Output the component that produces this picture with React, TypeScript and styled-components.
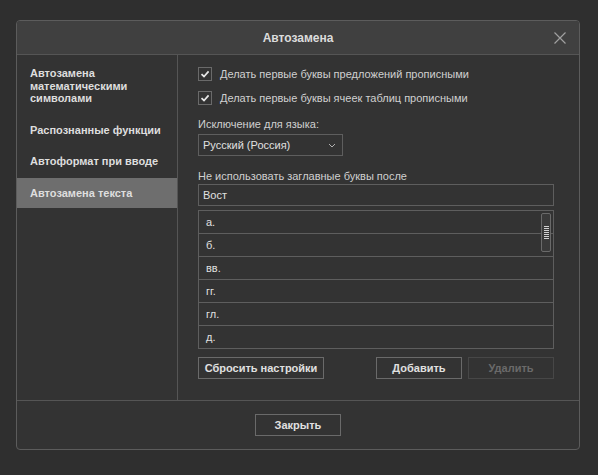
import React from "react";
import styled, { createGlobalStyle } from "styled-components";

const GlobalStyle = createGlobalStyle`
  html, body {
    margin: 0;
    padding: 0;
    background: #2f2f2f;
    font-family: "Liberation Sans", Arial, sans-serif;
  }
`;

const Page = styled.div`
  width: 598px;
  height: 475px;
  padding: 20px 19px 0 16px;
  box-sizing: border-box;
`;

const Dialog = styled.div`
  width: 564px;
  height: 430px;
  box-sizing: border-box;
  border: 1px solid #5c5c5c;
  border-radius: 4px;
  background: #333333;
  display: flex;
  flex-direction: column;
  overflow: hidden;
`;

const Header = styled.div`
  height: 33px;
  flex: none;
  background: #404040;
  border-bottom: 1px solid #555;
  display: flex;
  align-items: center;
  justify-content: center;
  position: relative;
  color: #dcdcdc;
  font-weight: bold;
  font-size: 12px;
`;

const Close = styled.div`
  position: absolute;
  right: 12px;
  top: 10px;
  width: 14px;
  height: 14px;
`;

const Body = styled.div`
  flex: 1;
  display: flex;
  border-bottom: 1px solid #555;
`;

const Sidebar = styled.div`
  width: 160px;
  flex: none;
  border-right: 1px solid #555;
  padding-top: 6px;
  display: flex;
  flex-direction: column;
`;

const NavItem = styled.div<{ $active?: boolean; $gap?: number }>`
  padding: ${(p) => (p.$active ? "9px 13px 9px" : "6px 13px 7px")};
  margin-bottom: ${(p) => p.$gap ?? 6}px;
  background: ${(p) => (p.$active ? "#6e6e6e" : "transparent")};
  color: #dedede;
  font-weight: bold;
  font-size: 11px;
  line-height: 12.5px;
`;

const Main = styled.div`
  flex: 1;
  min-width: 0;
  padding: 12px 25px 0 20px;
  display: flex;
  flex-direction: column;
  color: #d0d0d0;
  font-size: 11px;
`;

const CheckRow = styled.div`
  display: flex;
  align-items: center;
  gap: 8px;
  height: 14px;
  margin-bottom: 10px;
`;

const Box = styled.div`
  width: 12px;
  height: 12px;
  border: 1px solid #6a6a6a;
  display: flex;
  align-items: center;
  justify-content: center;
`;

const Label = styled.div<{ $top?: number; $bottom?: number }>`
  margin-top: ${(p) => p.$top ?? 0}px;
  margin-bottom: ${(p) => p.$bottom ?? 3}px;
  line-height: 13px;
`;

const Select = styled.div`
  width: 145px;
  height: 22px;
  box-sizing: border-box;
  border: 1px solid #5e5e5e;
  display: flex;
  align-items: center;
  justify-content: space-between;
  padding: 0 6px 0 4px;
  color: #e0e0e0;
`;

const Input = styled.div`
  height: 22px;
  box-sizing: border-box;
  border: 1px solid #5e5e5e;
  display: flex;
  align-items: center;
  padding: 0 4px;
  color: #e0e0e0;
`;

const List = styled.div`
  margin-top: 4px;
  border: 1px solid #5e5e5e;
  position: relative;
`;

const Row = styled.div<{ $last?: boolean }>`
  height: 22px;
  display: flex;
  align-items: center;
  padding-left: 7px;
  border-bottom: ${(p) => (p.$last ? "none" : "1px solid #5e5e5e")};
  color: #e0e0e0;
`;

const Thumb = styled.div`
  position: absolute;
  right: 2px;
  top: 2px;
  width: 8px;
  height: 37px;
  border: 1px solid #6a6a6a;
  border-radius: 2px;
  background: #3a3a3a;
  display: flex;
  flex-direction: column;
  align-items: center;
  justify-content: center;
  gap: 1px;
`;

const Grip = styled.div`
  width: 5px;
  height: 1px;
  background: #d0d0d0;
`;

const Buttons = styled.div`
  display: flex;
  margin-top: 8px;
  gap: 6px;
`;

const Spacer = styled.div`
  flex: 1;
`;

const Button = styled.div<{ $w: number; $disabled?: boolean }>`
  width: ${(p) => p.$w}px;
  flex: none;
  height: 22px;
  box-sizing: border-box;
  border: 1px solid ${(p) => (p.$disabled ? "#474747" : "#6a6a6a")};
  color: ${(p) => (p.$disabled ? "#6a6a6a" : "#e0e0e0")};
  display: flex;
  align-items: center;
  justify-content: center;
  font-weight: bold;
  font-size: 11px;
`;

const Footer = styled.div`
  height: 48px;
  flex: none;
  display: flex;
  align-items: center;
  justify-content: center;
`;

const rows = ["а.", "б.", "вв.", "гг.", "гл.", "д."];

const Check = () => (
  <svg width="10" height="10" viewBox="0 0 10 10">
    <path d="M1.5 5.2 L4 7.5 L8.6 2.4" fill="none" stroke="#e6e6e6" strokeWidth="1.7" />
  </svg>
);

export default function App() {
  return (
    <Page>
      <GlobalStyle />
      <Dialog>
        <Header>
          Автозамена
          <Close>
            <svg width="14" height="14" viewBox="0 0 14 14">
              <path d="M1.5 1.5 L12.5 12.5 M12.5 1.5 L1.5 12.5" stroke="#a0a0a0" strokeWidth="1.2" />
            </svg>
          </Close>
        </Header>
        <Body>
          <Sidebar>
            <NavItem>
              Автозамена
              <br />
              математическими
              <br />
              символами
            </NavItem>
            <NavItem>Распознанные функции</NavItem>
            <NavItem $gap={3}>Автоформат при вводе</NavItem>
            <NavItem $active $gap={0}>
              Автозамена текста
            </NavItem>
          </Sidebar>
          <Main>
            <CheckRow>
              <Box>
                <Check />
              </Box>
              Делать первые буквы предложений прописными
            </CheckRow>
            <CheckRow>
              <Box>
                <Check />
              </Box>
              Делать первые буквы ячеек таблиц прописными
            </CheckRow>
            <Label $top={3} $bottom={3}>
              Исключение для языка:
            </Label>
            <Select>
              Русский (Россия)
              <svg width="8" height="5" viewBox="0 0 8 5">
                <path d="M1 1 L4 4 L7 1" fill="none" stroke="#b0b0b0" strokeWidth="1" />
              </svg>
            </Select>
            <Label $top={14} $bottom={1}>
              Не использовать заглавные буквы после
            </Label>
            <Input>Вост</Input>
            <List>
              {rows.map((r, i) => (
                <Row key={r} $last={i === rows.length - 1}>
                  {r}
                </Row>
              ))}
              <Thumb>
                {Array.from({ length: 7 }).map((_, i) => (
                  <Grip key={i} />
                ))}
              </Thumb>
            </List>
            <Buttons>
              <Button $w={126}>Сбросить настройки</Button>
              <Spacer />
              <Button $w={86}>Добавить</Button>
              <Button $w={86} $disabled>
                Удалить
              </Button>
            </Buttons>
          </Main>
        </Body>
        <Footer>
          <Button $w={86}>Закрыть</Button>
        </Footer>
      </Dialog>
    </Page>
  );
}
